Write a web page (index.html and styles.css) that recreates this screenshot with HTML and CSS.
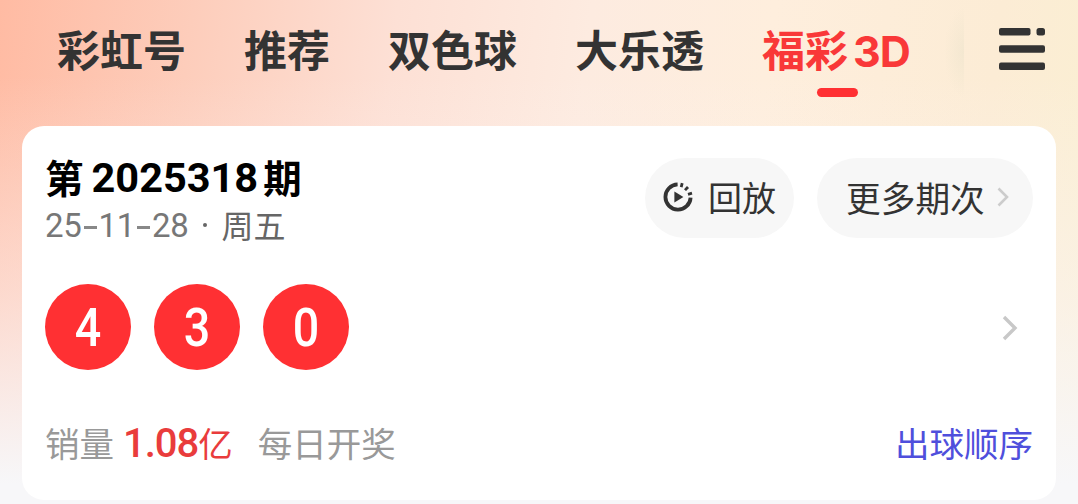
FILE: index.html
```html
<!DOCTYPE html>
<html lang="zh-CN">
<head>
  <meta charset="UTF-8">
  <meta name="viewport" content="width=device-width, initial-scale=1.0">
  <link rel="stylesheet" href="styles.css">
  <title>福彩3D</title>
</head>
<body>

<div class="page">
  <nav class="tabs">
    <a class="tab">彩虹号</a>
    <a class="tab">推荐</a>
    <a class="tab">双色球</a>
    <a class="tab">大乐透</a>
    <a class="tab tab-active">福彩<span class="tab-latin">3D</span></a>
    <div class="tabs-fade"></div>
    <svg class="menu-icon" width="46" height="42" viewBox="0 0 46 42" fill="#333">
      <rect x="0" y="0" width="31.5" height="7.5" rx="2"/>
      <rect x="37.5" y="0" width="8.5" height="7.5" rx="2.5"/>
      <rect x="0" y="17.2" width="46" height="7.5" rx="2"/>
      <rect x="0" y="34.4" width="46" height="7.5" rx="2"/>
    </svg>
  </nav>

  <div class="card">
    <div class="card-header">
      <div class="issue">
        <div class="issue-title">第<span class="issue-number">2025318</span>期</div>
        <div class="issue-date"><span class="date-number">25<i class="dash"></i>11<i class="dash"></i>28</span><i class="date-dot"></i>周五</div>
      </div>
      <div class="button button-replay">
        <svg width="30" height="30" viewBox="0 0 30 30" fill="none" stroke="#333" stroke-width="3.8">
          <path d="M14.6 2.4A12.6 12.6 0 1 0 27.6 15.6"/>
          <path d="M19.2 1.2L18.2 5.2M25 5L22 8.1M29 11.2L25 12.4" stroke-width="2.8"/>
          <path d="M11.4 9.4V20.6L20.4 15Z" fill="#333" stroke="none"/>
        </svg>
        回放
      </div>
      <div class="button button-more">
        更多期次
        <svg width="12" height="20" viewBox="0 0 12 20" fill="none" stroke="#ccc" stroke-width="2.6">
          <path d="M1.5 1.5L10 10L1.5 18.5"/>
        </svg>
      </div>
    </div>

    <div class="result">
      <div class="ball"><span class="ball-number">4</span></div>
      <div class="ball"><span class="ball-number">3</span></div>
      <div class="ball"><span class="ball-number">0</span></div>
      <svg class="result-arrow" width="16" height="26" viewBox="0 0 16 26" fill="none" stroke="#c8c8c8" stroke-width="3.4">
        <path d="M2 2L13 13L2 24"/>
      </svg>
    </div>

    <div class="card-footer">
      <span>销量</span>
      <span class="sales"><span class="sales-number">1.08</span>亿</span>
      <span class="schedule">每日开奖</span>
      <a class="order-link">出球顺序</a>
    </div>
  </div>
</div>

</body>
</html>
```
FILE: styles.css
```css
* {
  box-sizing: border-box;
}

body {
  margin: 0;
  font-family: "Noto Sans CJK SC", sans-serif;
  background-color: #f7f7f9;
}

.page {
  height: 504px;
  overflow: hidden;
  background:
    linear-gradient(180deg, rgba(251, 244, 244, 0) 15%, rgba(251, 244, 244, 0.5) 58%, #f7f7f9 96%),
    linear-gradient(97deg, #ffbba3 0%, #fdcdbb 17%, #fde0d5 35%, #fdebe0 52%, #feeedd 68%, #fcecd5 88%, #faefd2 100%);
}

/* Top tabs */
.tabs {
  display: flex;
  height: 126px;
  padding: 16px 33px 0 57px;
}

.tab {
  height: 64px;
  margin-right: 58px;
  font-size: 43px;
  line-height: 64px;
  font-weight: bold;
  color: #333;
  white-space: nowrap;
}

.tab-active {
  position: relative;
  margin-right: 0;
  color: #f93838;
}

.tab-active::after {
  content: "";
  position: absolute;
  left: 55px;
  top: 72px;
  width: 41px;
  height: 9px;
  border-radius: 5px;
  background-color: #ff3033;
}

.tab-latin {
  margin-left: 5px;
  font-family: Inter, sans-serif;
  font-size: 43px;
  letter-spacing: -1px;
}

.tabs-fade {
  width: 20px;
  height: 92px;
  margin: -10px 0 0 auto;
  background: radial-gradient(ellipse at 100% 50%, rgba(230, 224, 200, 0.4), rgba(230, 224, 200, 0) 70%);
}

.menu-icon {
  margin: 12px 0 0 35px;
}

/* Result card */
.card {
  height: 374px;
  margin: 0 22px;
  padding: 32px 23px 0;
  border-radius: 22px;
  background-color: #fff;
}

.card-header {
  display: flex;
  align-items: flex-start;
  height: 80px;
}

.issue {
  flex: 1;
}

.issue-title {
  display: flex;
  align-items: center;
  height: 40px;
  margin-top: -2px;
  font-size: 38.5px;
  line-height: 40px;
  font-weight: bold;
  color: #000;
  white-space: nowrap;
}

.issue-number {
  margin: 3px 5px 0 8px;
  font-family: Roboto, sans-serif;
  font-size: 41.5px;
}

.issue-date {
  display: flex;
  align-items: center;
  height: 40px;
  margin-top: 8px;
  font-size: 32px;
  line-height: 40px;
  color: #666;
}

.date-number {
  display: flex;
  align-items: center;
  margin-top: 3px;
  font-family: Roboto, sans-serif;
  font-size: 33px;
  letter-spacing: -0.3px;
  color: #777;
}

.dash {
  width: 13px;
  height: 3px;
  margin: 3px 2px 0;
  background-color: #888;
}

.date-dot {
  width: 4px;
  height: 4px;
  margin: 2px 15px 0 14px;
  border-radius: 50%;
  background-color: #666;
}

.button {
  display: flex;
  align-items: center;
  height: 80px;
  border-radius: 40px;
  font-size: 34px;
  line-height: 76px;
  padding-bottom: 2px;
  color: #333;
  background-color: #f7f7f7;
}

.button-replay {
  gap: 15px;
  width: 149px;
  margin-right: 23px;
  padding-left: 18px;
}

.button-more {
  gap: 12px;
  width: 216px;
  padding-left: 29px;
  font-size: 34.7px;
}

.result {
  display: flex;
  align-items: center;
  gap: 23px;
  margin-top: 46px;
}

.ball {
  width: 86px;
  height: 86px;
  border-radius: 50%;
  font-family: Roboto, sans-serif;
  font-size: 53px;
  font-weight: 500;
  line-height: 88px;
  text-align: center;
  color: #fff;
  background-color: #ff3033;
}

.ball-number {
  display: inline-block;
  transform: scaleX(0.88);
}

.result-arrow {
  margin: 2px 15px 0 auto;
}

.card-footer {
  display: flex;
  align-items: center;
  height: 50px;
  margin-top: 47px;
  font-size: 34.5px;
  line-height: 50px;
  color: #999;
}

.sales {
  display: flex;
  align-items: center;
  margin-left: 9px;
  color: #e93c3c;
}

.sales-number {
  margin-top: 3px;
  font-family: Roboto, sans-serif;
  font-size: 40px;
  font-weight: 500;
  letter-spacing: -1px;
}

.schedule {
  margin-left: 25px;
}

.order-link {
  margin-left: auto;
  color: #4f4fdc;
}
```
